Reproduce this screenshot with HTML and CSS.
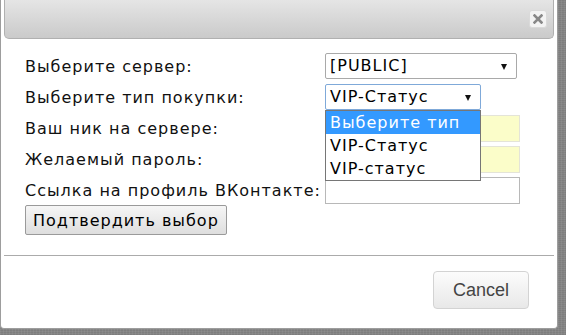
FILE: index.html
```html
<!DOCTYPE html>
<html lang="ru">
<head>
  <meta charset="UTF-8" />
  <title>Покупка привилегий</title>
  <link rel="stylesheet" href="styles.css">
</head>
<body>
  <div class="dialog">
    <div class="titlebar">
      <button class="titlebar-close" title="close">
        <svg width="10" height="10" viewBox="0 0 10 10"><path d="M1.5 1.5 L8.5 8.5 M8.5 1.5 L1.5 8.5" stroke="#888" stroke-width="2.6" stroke-linecap="square"/></svg>
      </button>
    </div>

    <div class="dialog-content">
      <div class="buy-form">
        <label>Выберите сервер:</label>
        <div class="field"><div class="fake-select server">[PUBLIC]<span class="arrow"></span></div></div>

        <label>Выберите тип покупки:</label>
        <div class="field">
          <div class="fake-select type focused">VIP-Статус<span class="arrow"></span></div>
          <ul class="select-list">
            <li class="selected">Выберите тип</li>
            <li>VIP-Статус</li>
            <li>VIP-статус</li>
          </ul>
        </div>

        <label>Ваш ник на сервере:</label>
        <div class="field"><input type="text" class="autofill"></div>

        <label>Желаемый пароль:</label>
        <div class="field"><input type="password" class="autofill"></div>

        <label>Ссылка на профиль ВКонтакте:</label>
        <div class="field"><input type="text"></div>
      </div>
      <button class="submit-btn">Подтвердить выбор</button>
    </div>

    <div class="buttonpane">
      <button class="cancel-btn">Cancel</button>
    </div>
  </div>
</body>
</html>
```

FILE: styles.css
```css
body {
  margin: 0;
  background-color: #858585;
  background-image: repeating-linear-gradient(90deg, rgba(255,255,255,0.06) 0 1px, transparent 1px 3px),
                    repeating-linear-gradient(0deg, rgba(0,0,0,0.06) 0 1px, transparent 1px 2px);
  font-family: "DejaVu Sans", Verdana, sans-serif;
  height: 335px;
  overflow: hidden;
}

.dialog {
  width: 550px;
  padding: 0 3px;
  background: #fff;
  border: 1px solid #9d9d9d;
  border-top: none;
  border-radius: 0 0 4px 4px;
}

.titlebar {
  height: 38px;
  border: 1px solid #b0b0b0;
  border-top: none;
  border-radius: 0 0 5px 5px;
  background: linear-gradient(to bottom, #e5e5e5, #cacaca);
  display: flex;
  justify-content: flex-end;
  align-items: flex-start;
  padding-right: 6px;
}

.titlebar-close {
  margin-top: 10px;
  width: 18px;
  height: 18px;
  padding: 0;
  border: 1px solid #dadada;
  border-radius: 3px;
  background: #f3f3f3;
  display: flex;
  align-items: center;
  justify-content: center;
}

.dialog-content {
  height: 205px;
  padding: 11px 0 0 21px;
}

.buy-form {
  display: grid;
  grid-template-columns: 300px 200px;
  grid-auto-rows: 31px;
  align-items: center;
  font-size: 16px;
  letter-spacing: 1px;
  color: #111;
}

.buy-form label {
  line-height: 18px;
  padding-top: 3px;
  white-space: nowrap;
}

.field {
  position: relative;
  height: 26px;
}

.fake-select {
  box-sizing: border-box;
  height: 26px;
  border: 1px solid #a9a9a9;
  border-radius: 2px;
  padding: 0 0 0 4px;
  font-size: 16px;
  line-height: 24px;
  color: #000;
  background: #fff;
  position: relative;
}

.fake-select.server { width: 192px; }
.fake-select.type { width: 156px; }

.fake-select.focused {
  border-color: #7fa9d9;
}

.arrow {
  position: absolute;
  right: 9px;
  top: 10px;
  width: 0;
  height: 0;
  border-left: 3px solid transparent;
  border-right: 3px solid transparent;
  border-top: 6px solid #111;
}

.select-list {
  position: absolute;
  top: 26px;
  left: 0;
  width: 156px;
  box-sizing: border-box;
  margin: 0;
  padding: 0;
  list-style: none;
  background: #fff;
  border: 1px solid #767676;
  z-index: 5;
  font-size: 16px;
}

.select-list li {
  height: 23px;
  line-height: 23px;
  padding-left: 4px;
  color: #000;
  white-space: nowrap;
}

.select-list li.selected {
  background: #3399ff;
  color: #fff;
}

.field input {
  box-sizing: border-box;
  width: 195px;
  height: 27px;
  margin: 0;
  border: 1px solid #b8b8b8;
  background: #fff;
}

.field input.autofill {
  background: #fbfdc9;
  border-color: #e4e4d8;
}

.submit-btn {
  margin-top: 0;
  height: 30px;
  padding: 0 7px;
  font-family: "DejaVu Sans", Verdana, sans-serif;
  font-size: 16px;
  letter-spacing: 1px;
  color: #000;
  border: 1px solid #9a9a9a;
  border-radius: 2px;
  background: linear-gradient(to bottom, #f6f6f6, #dedede);
}

.buttonpane {
  border-top: 1px solid #ababab;
  height: 72px;
  display: flex;
  justify-content: flex-end;
  align-items: flex-start;
}

.cancel-btn {
  margin: 15px 25px 0 0;
  width: 96px;
  height: 38px;
  font-family: "Liberation Sans", Arial, sans-serif;
  font-size: 18px;
  color: #444;
  border: 1px solid #d3d3d3;
  border-radius: 4px;
  background: linear-gradient(to bottom, #fcfcfc, #e8e8e8);
}
```
